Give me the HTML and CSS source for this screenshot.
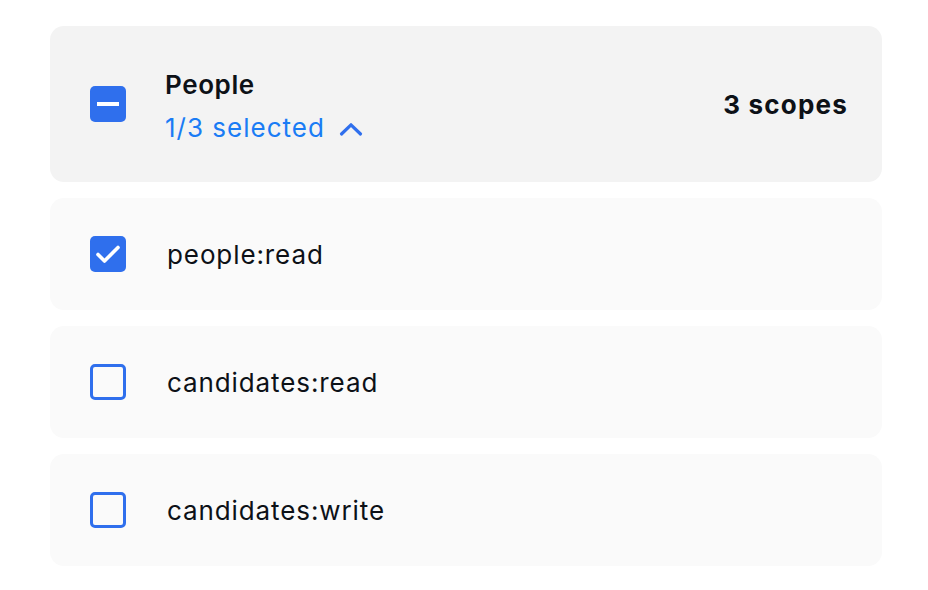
FILE: index.html
```html
<!DOCTYPE html>
<html>
<head>
<meta charset="utf-8">
<link rel="stylesheet" href="styles.css">
</head>
<body>
<div class="list">
  <div class="card header">
    <span class="cb cb-on">
      <svg width="36" height="36" viewBox="0 0 36 36"><rect x="7" y="16" width="22" height="4" fill="#fff"/></svg>
    </span>
    <div class="titles">
      <div class="title">People</div>
      <div class="sel">1/3 selected
        <svg class="chev" width="24" height="16" viewBox="0 0 24 16"><path d="M2.5 13 L12 3.8 L21.5 13" fill="none" stroke="#2f6fed" stroke-width="3.2" stroke-linecap="round" stroke-linejoin="round"/></svg>
      </div>
    </div>
    <div class="count">3 scopes</div>
  </div>
  <div class="card row">
    <span class="cb cb-on">
      <svg width="36" height="36" viewBox="0 0 36 36"><path d="M8 18.5 L14.5 25 L28 11.5" fill="none" stroke="#fff" stroke-width="3.6" stroke-linecap="round" stroke-linejoin="round"/></svg>
    </span>
    <span class="label">people:read</span>
  </div>
  <div class="card row">
    <span class="cb cb-off"></span>
    <span class="label">candidates:read</span>
  </div>
  <div class="card row">
    <span class="cb cb-off"></span>
    <span class="label">candidates:write</span>
  </div>
</div>
</body>
</html>
```

FILE: styles.css
```css
* { box-sizing: border-box; }
html, body { margin: 0; padding: 0; background: #ffffff; }
body {
  font-family: Inter, "Noto Sans", sans-serif;
  color: #0d1117;
}
.list {
  margin: 26px 46px 0 50px;
  display: flex;
  flex-direction: column;
  gap: 16px;
}
.card {
  border-radius: 14px;
  display: flex;
  align-items: center;
  padding: 0 34px 0 40px;
}
.header {
  background: #f3f3f3;
  height: 156px;
}
.row {
  background: #fafafa;
  height: 112px;
}
.cb {
  width: 36px;
  height: 36px;
  border-radius: 5px;
  flex: none;
  display: block;
}
.cb svg { display: block; }
.cb-on { background: #2f6fed; }
.cb-off { border: 3.5px solid #2f6fed; background: transparent; }
.titles {
  margin-left: 39px;
  display: flex;
  flex-direction: column;
  gap: 13px;
  flex: 1;
  padding-top: 5px;
}
.title {
  font-size: 26px;
  font-weight: 600;
  line-height: 30px;
  letter-spacing: 0.6px;
}
.sel {
  font-size: 26px;
  color: #1a7cf5;
  line-height: 30px;
  letter-spacing: 1px;
  display: flex;
  align-items: center;
  gap: 14px;
}
.chev { display: block; margin-top: 1px; }
.count {
  font-size: 26px;
  font-weight: 700;
  letter-spacing: 1.2px;
}
.label {
  margin-left: 41px;
  font-size: 26px;
  letter-spacing: 0.9px;
}
```
